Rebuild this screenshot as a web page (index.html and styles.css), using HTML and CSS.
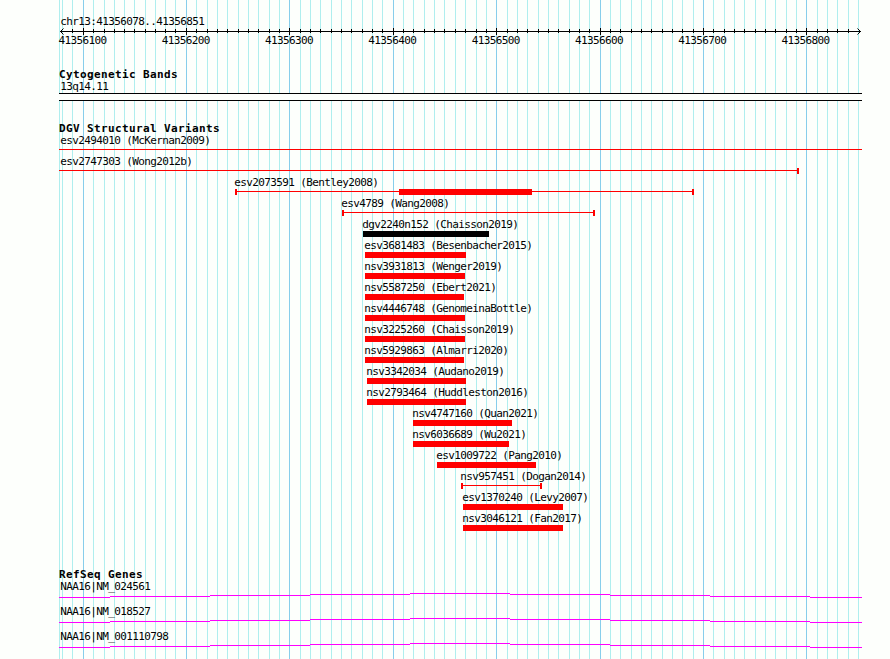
FILE: index.html
```html
<!DOCTYPE html>
<html lang="en">

<head>
  <meta charset="UTF-8">
  <meta name="viewport" content="width=device-width, initial-scale=1.0">
  <title>chr13:41356078..41356851</title>
  <link rel="stylesheet" href="styles.css">
</head>

<body>
  <div class="browser">
    <svg class="grid" id="grid" width="890" height="659" shape-rendering="crispEdges"></svg>

    <div class="track overview">
      <div class="label">chr13:41356078..41356851</div>
      <svg class="ruler" id="ruler" width="890" height="7" shape-rendering="crispEdges"></svg>
      <div class="ruler-labels">
        <span>41356100</span>
        <span>41356200</span>
        <span>41356300</span>
        <span>41356400</span>
        <span>41356500</span>
        <span>41356600</span>
        <span>41356700</span>
        <span>41356800</span>
      </div>
    </div>

    <div class="track cytobands">
      <h2>Cytogenetic Bands</h2>
      <div class="label">13q14.11</div>
      <div class="band"></div>
    </div>

    <div class="track variants">
      <h2>DGV Structural Variants</h2>
      <div id="variants"></div>
    </div>

    <div class="track genes">
      <h2>RefSeq Genes</h2>
      <div class="gene">
        <div class="label">NAA16|NM_024561</div>
        <svg class="intron" width="803" height="5" shape-rendering="crispEdges"><use href="#intron-line" /></svg>
      </div>
      <div class="gene">
        <div class="label">NAA16|NM_018527</div>
        <svg class="intron" width="803" height="5" shape-rendering="crispEdges"><use href="#intron-line" /></svg>
      </div>
      <div class="gene">
        <div class="label">NAA16|NM_001110798</div>
        <svg class="intron" width="803" height="5" shape-rendering="crispEdges"><use href="#intron-line" /></svg>
      </div>
    </div>
  </div>

  <svg class="defs" width="0" height="0">
    <defs>
      <path id="intron-line" d="M0 4.5H51M51 3.5H151M151 2.5H251M251 1.5H351M351 .5H451M451 1.5H551M551 2.5H651M651 3.5H751M751 4.5H803" />
    </defs>
  </svg>

  <script src="script.js"></script>
</body>

</html>
```
FILE: styles.css
```css
:root {
  --page: #fdfffc;
  --grid-minor: #afeeee;
  --grid-major: #87ceeb;
  --variant: #ff0000;
  --gene: #ff00ff;
  --left: 59px;
  --panel-width: 803px;
}

* {
  box-sizing: border-box;
  margin: 0;
  padding: 0;
}

body {
  background-color: var(--page);
  color: #000;
  font-family: "DejaVu Sans Mono", "Liberation Mono", monospace;
  font-size: 11px;
  line-height: 13px;
  overflow: hidden;
}

svg {
  display: block;
}

.browser {
  position: relative;
  width: 890px;
  height: 659px;
  padding-top: 15px;
  overflow: hidden;
}

/* grid lines lie behind every track */
.grid {
  position: absolute;
  top: 0;
  left: 0;
  z-index: -1;
  stroke: var(--grid-minor);
}

.grid .major {
  stroke: var(--grid-major);
}

.defs {
  position: absolute;
}

h2 {
  height: 12px;
  margin-left: var(--left);
  font-size: 11px;
  font-weight: bold;
  letter-spacing: 0.378px;
  white-space: pre;
}

.label {
  height: 13px;
  margin-left: 60px;
  padding-left: 0.3px;
  letter-spacing: -0.622px;
  white-space: pre;
}

/* ruler */
.overview {
  height: 53px;
}

.ruler {
  stroke: #000;
  fill: none;
}

.ruler-labels {
  display: flex;
  justify-content: space-between;
  width: 771px;
  margin-left: 58.5px;
  margin-top: -1px;
  letter-spacing: -0.622px;
}

/* cytogenetic bands */
.cytobands {
  height: 54px;
}

.band {
  width: var(--panel-width);
  height: 8px;
  margin-left: var(--left);
  border-top: 1px solid #000;
  border-bottom: 1px solid #000;
  background-color: var(--page);
}

/* structural variants */
.variants {
  height: 446px;
}

.variant {
  height: 21px;
}

.glyph {
  height: 6px;
  display: flex;
  color: var(--variant);
}

.glyph.black {
  color: #000;
}

.solid {
  background-color: currentColor;
}

.line {
  flex: 1;
  height: 1px;
  margin-top: 2px;
  background-color: currentColor;
}

.cap {
  width: 2px;
  background-color: currentColor;
}

/* genes */
.gene {
  height: 25px;
}

.intron {
  margin-left: var(--left);
  stroke: var(--gene);
}
```
FILE: script.js
```js
const majors = [83, 186, 289, 393, 496, 600, 703, 806];
const minors = [
  62, 72, 93, 104, 114, 124, 134, 145, 155, 165, 175,
  196, 207, 217, 227, 238, 248, 258, 269, 279,
  300, 310, 320, 331, 341, 351, 362, 372, 382,
  403, 413, 424, 434, 444, 455, 465, 476, 486,
  507, 517, 527, 538, 548, 558, 569, 579, 589,
  610, 620, 631, 641, 651, 662, 672, 682, 693,
  713, 724, 734, 744, 755, 765, 775, 786, 796,
  817, 827, 837, 848, 858
];

// vertical strokes at the given x positions
function ticks(xs, top, bottom) {
  return xs.map(x => `M${x + 0.5} ${top}V${bottom}`).join('');
}

document.getElementById('grid').innerHTML =
  `<path d="${ticks([59, ...minors], 0, 659)}"/>` +
  `<path class="major" d="${ticks(majors, 0, 659)}"/>`;

document.getElementById('ruler').innerHTML =
  `<path d="M60 3.5H861${ticks(minors.slice(1, -1), 1, 5)}${ticks(majors, 0, 7)}"/>` +
  '<path shape-rendering="auto" d="M63.5 .5L60.5 3.5L63.5 6.5M857.5 .5L860.5 3.5L857.5 6.5"/>';

// solid: one thick bar, range: thin line with end caps, block: thick part inside a range
const variants = [
  { name: 'esv2494010 (McKernan2009)', start: 59, end: 862, type: 'range', caps: '' },
  { name: 'esv2747303 (Wong2012b)', start: 59, end: 799, type: 'range', caps: 'r' },
  { name: 'esv2073591 (Bentley2008)', start: 235, end: 694, type: 'range', caps: 'lr', block: [399, 532] },
  { name: 'esv4789 (Wang2008)', start: 342, end: 595, type: 'range', caps: 'lr' },
  { name: 'dgv2240n152 (Chaisson2019)', start: 363, end: 489, type: 'solid', color: 'black' },
  { name: 'esv3681483 (Besenbacher2015)', start: 365, end: 466, type: 'solid' },
  { name: 'nsv3931813 (Wenger2019)', start: 365, end: 465, type: 'solid' },
  { name: 'nsv5587250 (Ebert2021)', start: 365, end: 464, type: 'solid' },
  { name: 'nsv4446748 (GenomeinaBottle)', start: 365, end: 465, type: 'solid' },
  { name: 'nsv3225260 (Chaisson2019)', start: 365, end: 465, type: 'solid' },
  { name: 'nsv5929863 (Almarri2020)', start: 365, end: 464, type: 'solid' },
  { name: 'nsv3342034 (Audano2019)', start: 367, end: 466, type: 'solid' },
  { name: 'nsv2793464 (Huddleston2016)', start: 367, end: 466, type: 'solid' },
  { name: 'nsv4747160 (Quan2021)', start: 413, end: 512, type: 'solid' },
  { name: 'nsv6036689 (Wu2021)', start: 413, end: 509, type: 'solid' },
  { name: 'esv1009722 (Pang2010)', start: 437, end: 536, type: 'solid' },
  { name: 'nsv957451 (Dogan2014)', start: 461, end: 542, type: 'range', caps: 'lr' },
  { name: 'esv1370240 (Levy2007)', start: 463, end: 563, type: 'solid' },
  { name: 'nsv3046121 (Fan2017)', start: 463, end: 563, type: 'solid' }
];

function drawGlyph(v) {
  if (v.type === 'solid') {
    return `<div class="solid" style="width: ${v.end - v.start}px"></div>`;
  }
  const left = v.caps.includes('l') ? '<div class="cap"></div>' : '';
  const right = v.caps.includes('r') ? '<div class="cap"></div>' : '';
  if (!v.block) {
    return left + '<div class="line"></div>' + right;
  }
  const [from, to] = v.block;
  return left +
    `<div class="line" style="flex-grow: ${from - v.start - 2}"></div>` +
    `<div class="solid" style="width: ${to - from}px"></div>` +
    `<div class="line" style="flex-grow: ${v.end - to - 2}"></div>` +
    right;
}

document.getElementById('variants').innerHTML = variants.map(v => `
  <div class="variant">
    <div class="label" style="margin-left: ${Math.max(v.start - 1, 60)}px">${v.name}</div>
    <div class="glyph ${v.color || ''}" style="margin-left: ${v.start}px; width: ${v.end - v.start}px">${drawGlyph(v)}</div>
  </div>`).join('');
```
